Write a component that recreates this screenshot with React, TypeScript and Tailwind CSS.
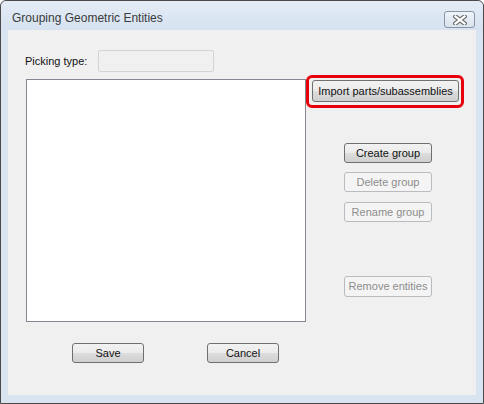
import React from 'react';

const font = { fontFamily: '"Liberation Sans", Arial, sans-serif' };

function WinButton({
  label,
  disabled,
  className = '',
}: {
  label: string;
  disabled?: boolean;
  className?: string;
}) {
  return (
    <button
      disabled={disabled}
      className={
        'flex items-center justify-center whitespace-nowrap rounded-[3px] border text-[11px] leading-none ' +
        (disabled
          ? 'border-[#b8bcc0] bg-[#f4f4f4] text-[#8d8d8d] '
          : 'border-[#707070] bg-[linear-gradient(#f2f2f2_0%,#ebebeb_50%,#dddddd_50%,#cfcfcf_100%)] text-[#111] ') +
        className
      }
    >
      {label}
    </button>
  );
}

export default function App() {
  return (
    <div className="w-[484px] h-[404px] bg-white" style={font}>
      <div className="w-[484px] h-[404px] flex flex-col border border-[#4a4a4a] rounded-t-[6px] bg-[#d9e4f1]">
        {/* Title bar */}
        <div className="h-[29px] flex items-start shrink-0 rounded-t-[6px] bg-[linear-gradient(#e4ecf6,#d6e2f0)]">
          <div className="pl-[11px] pt-[10px] text-[12px] leading-[14px] whitespace-nowrap text-[#3a3a3a]">
            Grouping Geometric Entities
          </div>
          <div className="ml-auto mr-[8px] mt-[10px] w-[31px] h-[17px] rounded-[3px] border border-[#8a94a4] bg-[linear-gradient(#eef3f9,#d8e2ee)] flex items-center justify-center">
            <svg width="14" height="10" viewBox="0 0 14 10">
              <path
                d="M2.5 1.5 L11.5 8.5 M11.5 1.5 L2.5 8.5"
                stroke="#707070"
                strokeWidth="4.5"
                strokeLinecap="square"
              />
              <path
                d="M2.5 1.5 L11.5 8.5 M11.5 1.5 L2.5 8.5"
                stroke="#ffffff"
                strokeWidth="2.2"
                strokeLinecap="square"
              />
            </svg>
          </div>
        </div>

        {/* Client area */}
        <div className="mx-[7px] h-[365px] shrink-0 bg-[#f0f0f0] pl-[17px] flex flex-col">
          <div className="mt-[20px] h-[22px] flex items-center">
            <span className="w-[73px] text-[11px] whitespace-nowrap text-[#111]">Picking type:</span>
            <div className="w-[116px] h-[22px] rounded-[2px] border border-[#d4d4d4] bg-[#f0f0f0]" />
          </div>

          <div className="mt-[7px] flex">
            <div className="ml-px w-[280px] h-[243px] border border-[#828790] bg-white" />
            <div className="flex flex-col">
              <div className="-mt-[4px] w-[158px] h-[33px] rounded-[6px] border-[3px] border-[#e8000b] pl-[3px] pt-[2px]">
                <WinButton label="Import parts/subassemblies" className="w-[147px] h-[22px]" />
              </div>
              <div className="pl-[38px] flex flex-col">
                <WinButton label="Create group" className="mt-[35px] w-[88px] h-[20px]" />
                <WinButton label="Delete group" disabled className="mt-[9px] w-[88px] h-[20px]" />
                <WinButton label="Rename group" disabled className="mt-[10px] w-[88px] h-[20px]" />
                <WinButton label="Remove entities" disabled className="mt-[54px] w-[88px] h-[21px]" />
              </div>
            </div>
          </div>

          <div className="mt-[21px] pl-[47px] flex gap-[63px]">
            <WinButton label="Save" className="w-[72px] h-[20px]" />
            <WinButton label="Cancel" className="w-[72px] h-[20px]" />
          </div>
        </div>
      </div>
    </div>
  );
}
